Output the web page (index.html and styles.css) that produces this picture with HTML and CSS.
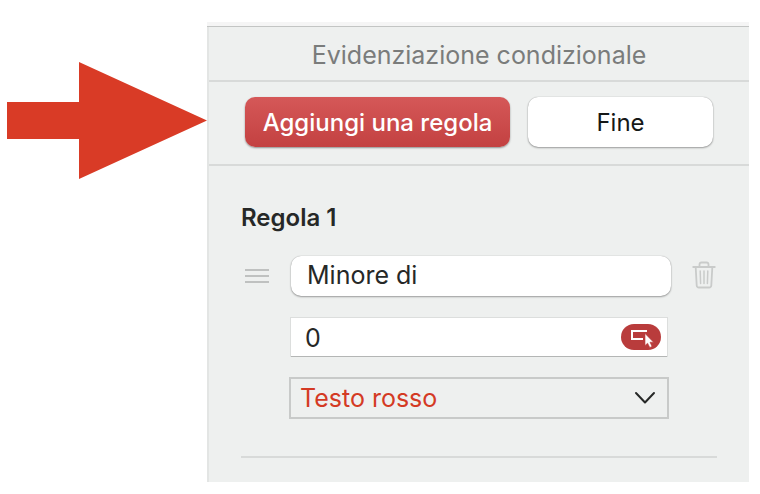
FILE: index.html
```html
<!DOCTYPE html>
<html lang="it">
<head>
<meta charset="utf-8">
<meta name="viewport" content="width=device-width, initial-scale=1">
<title>Evidenziazione condizionale</title>
<link rel="stylesheet" href="styles.css">
</head>
<body>
<svg class="arrow" viewBox="0 0 200 117" aria-hidden="true"><path d="M0 40H72V0L200 58.500 72 117V77H0Z" fill="#d93b26"/></svg>
<main class="panel">
  <h1 class="panel-title">Evidenziazione condizionale</h1>
  <div class="actions">
    <button class="btn btn-primary" type="button">Aggiungi una regola</button>
    <button class="btn btn-plain" type="button">Fine</button>
  </div>
  <section class="rule">
    <h2 class="rule-title">Regola 1</h2>
    <div class="rule-body">
      <button class="icon-btn handle" type="button" aria-label="Sposta regola">
        <svg width="24" height="14" viewBox="0 0 24 14" fill="#bfc1c0"><path d="M0 0H24V2H0ZM0 6H24V8H0ZM0 12H24V14H0Z"/></svg>
      </button>
      <select class="field condition" aria-label="Condizione"><option>Minore di</option></select>
      <button class="icon-btn trash" type="button" aria-label="Elimina regola">
        <svg width="24" height="28" viewBox="0 0 24 28" fill="none" stroke="#c9cbca" stroke-width="1.800" stroke-linecap="round" stroke-linejoin="round"><path d="M1.200 6H22.800M7.500 5.500V3.500Q7.500 1.500 9.500 1.500H14.500Q16.500 1.500 16.500 3.500V5.500M3.700 6.500L4.700 24.500Q4.900 26.500 6.900 26.500H17.100Q19.100 26.500 19.300 24.500L20.300 6.500"/><path stroke-width="1.500" d="M8.200 10L8.600 22.500M12 10V22.500M15.800 10L15.400 22.500"/></svg>
      </button>
      <div class="field value">
        <input class="value-input" type="text" value="0" aria-label="Valore">
        <button class="cell-picker" type="button" aria-label="Scegli cella">
          <svg width="40" height="26" viewBox="0 0 40 26"><path d="M26 7H11V15H22" fill="none" stroke="#fff" stroke-width="2"/><path d="M24 9.500V21.500L26.600 19.200 28.800 23.500 31 22.400 29 18.200H32.500Z" fill="#fff" stroke="#b93c3c" stroke-width=".6"/></svg>
        </button>
      </div>
      <div class="style-box">
        <select class="field style" aria-label="Stile"><option>Testo rosso</option></select>
        <svg class="chevron" width="22" height="14" viewBox="0 0 22 14" fill="none" stroke="#262827" stroke-width="2" stroke-linecap="round" stroke-linejoin="round"><path d="M2 2L11 11.500 20 2"/></svg>
      </div>
    </div>
  </section>
</main>
</body>
</html>
```
FILE: styles.css
```css
* {
  box-sizing: border-box;
}

body {
  display: flex;
  align-items: flex-start;
  margin: 0;
  padding: 22px 11px 12px 7px;
  background: #fff;
  color: #262827;
  font-family: Inter, "Liberation Sans", sans-serif;
  font-size: 25px;
}

button,
input,
select {
  margin: 0;
  padding: 0;
  border: 0;
  background: none;
  color: inherit;
  font: inherit;
  appearance: none;
}

.arrow {
  flex: none;
  width: 200px;
  margin-top: 40px;
}

.panel {
  flex: 1;
  min-width: 0;
  border-top: 4px solid #f5f5f5;
  background: #eef0ef;
  box-shadow: inset 0 1px #c3c5c4, inset 2px 0 #e3e5e4;
  padding-left: 2px;
}

.panel-title {
  margin: 0;
  padding: 13px 0 9px;
  border-bottom: 2px solid #d8dad9;
  color: #7a7c7b;
  font-size: 25px;
  font-weight: 400;
  line-height: 32px;
  text-align: center;
}

.actions {
  display: flex;
  gap: 18px;
  padding: 15px 36px 17px;
  border-bottom: 2px solid #d8dad9;
}

.btn {
  height: 50px;
  border-radius: 10px;
  font-size: 24px;
}

.btn-primary {
  flex: 265;
  background: linear-gradient(#d55858, #c34141);
  box-shadow: 0 1px 2px #00000066;
  color: #fff;
  font-weight: 500;
}

.btn-plain {
  flex: 185;
  background: #fff;
  box-shadow: 0 0 1px #00000055, 0 1px 2px #00000055;
  color: #161817;
}

.rule {
  padding: 36px 32px 24px;
}

.rule-title {
  margin: 0;
  font-size: 24px;
  font-weight: 600;
  line-height: 32px;
}

.rule-body {
  display: grid;
  grid-template-columns: 48px 1fr 48px;
  padding: 22px 0 37px;
  border-bottom: 2px solid #d8dad9;
}

.icon-btn {
  display: flex;
  align-items: center;
}

.handle {
  padding-left: 4px;
}

.trash {
  justify-content: flex-end;
  padding: 0 1px 3px 0;
}

.field {
  width: 100%;
  min-width: 0;
}

.condition {
  width: auto;
  height: 40px;
  margin: 0 -2px 0 2px;
  padding: 0 16px 2px;
  border-radius: 10px;
  background: #fff;
  box-shadow: 0 0 1px #00000055, 0 1px 2px #00000055;
}

.value {
  display: flex;
  align-items: center;
  grid-column: 2;
  width: auto;
  height: 38px;
  margin: 22px 2px 0;
  padding: 0 6px 0 14px;
  background: #fff;
  box-shadow: 0 1px #b4b6b5, 0 0 0 1px #dcdedd;
}

.value-input {
  flex: 1;
  min-width: 0;
  padding-top: 2px;
}

.cell-picker {
  display: flex;
  border-radius: 13px;
  background: #b93c3c;
}

.style-box {
  display: grid;
  grid-column: 2;
  align-items: center;
  margin-top: 21px;
}

.style {
  grid-area: 1 / 1;
  height: 42px;
  padding: 0 9px;
  border: 2px solid #c8cac9;
  color: #d43a24;
}

.chevron {
  grid-area: 1 / 1;
  justify-self: end;
  margin-right: 13px;
  pointer-events: none;
}
```
